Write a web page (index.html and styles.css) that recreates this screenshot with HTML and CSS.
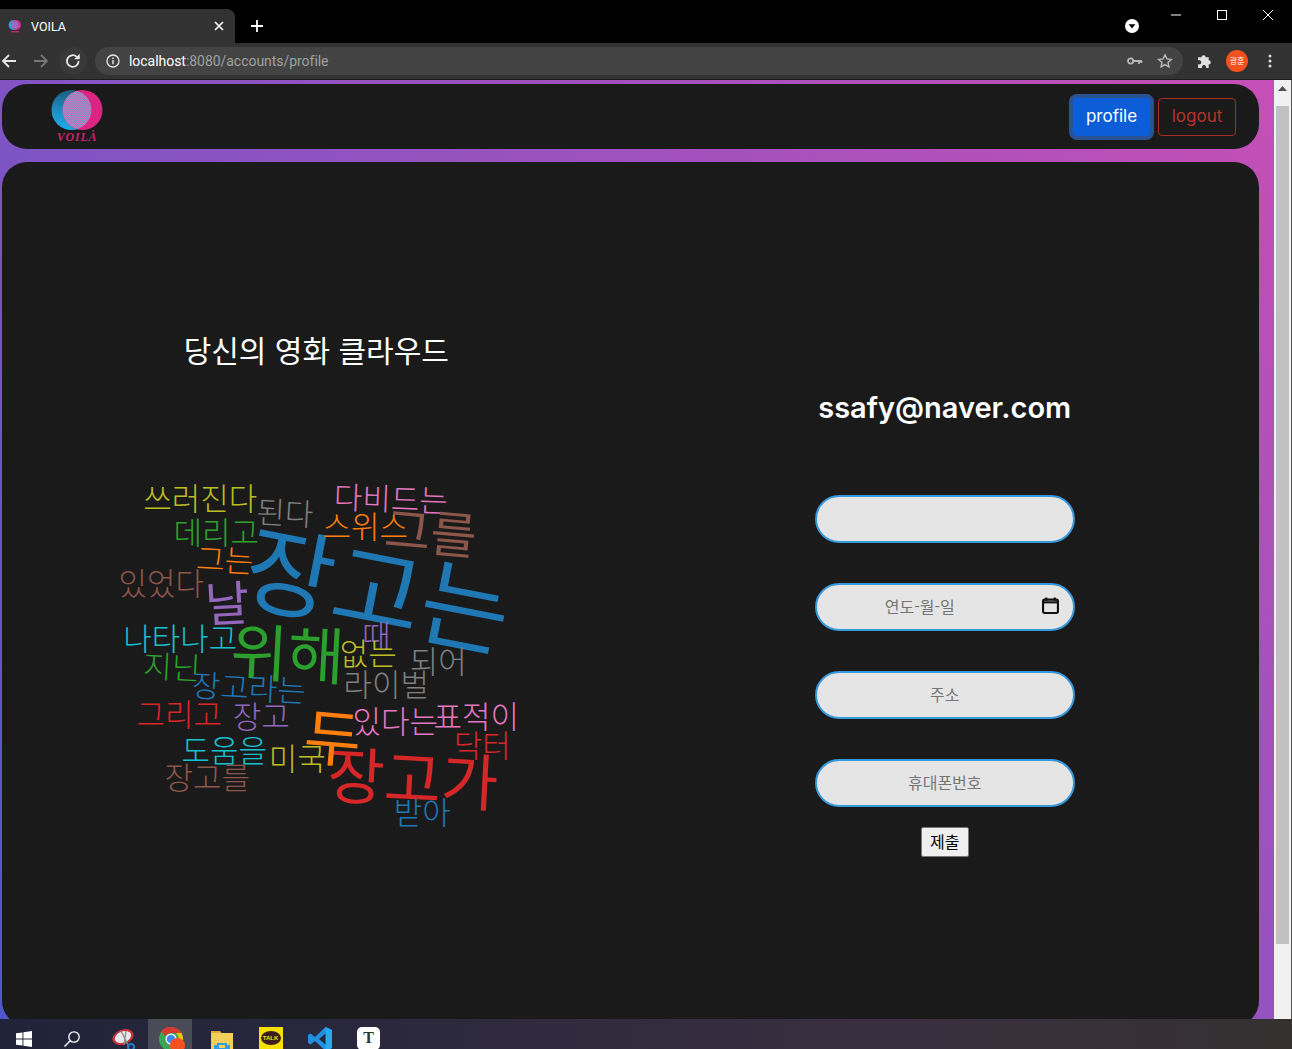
FILE: index.html
```html
<!DOCTYPE html>
<html lang="ko">
<head>
  <meta charset="UTF-8" />
  <title>VOILA</title>
  <link rel="stylesheet" href="styles.css">
</head>
<body>
  <div class="tabstrip">
    <div class="tab">
      <svg class="favicon" viewBox="0 0 14 14" width="14" height="14">
        <circle cx="5.6" cy="6" r="5" fill="#2a9fd6"/>
        <circle cx="8" cy="6" r="5" fill="#dd2a86"/>
        <circle cx="6.8" cy="6" r="3.8" fill="#9a6cc0"/>
        <rect x="3" y="12" width="8" height="1.4" fill="#c0246f"/>
      </svg>
      <span class="tab-title">VOILA</span>
      <svg class="tab-close" viewBox="0 0 10 10" width="10" height="10"><path d="M1 1l8 8M9 1l-8 8" stroke="#fff" stroke-width="1.7"/></svg>
    </div>
    <svg class="new-tab" viewBox="0 0 12 12" width="12" height="12"><path d="M6 0v12M0 6h12" stroke="#fff" stroke-width="1.8"/></svg>
    <div class="window-tools">
      <svg class="profile-drop" viewBox="0 0 14 14" width="14" height="14"><circle cx="7" cy="7" r="7" fill="#fff"/><path d="M3.6 5.2h6.8L7 9.4z" fill="#000"/></svg>
      <svg class="win-btn" viewBox="0 0 46 30" width="46" height="30"><path d="M18 15h10" stroke="#fff"/></svg>
      <svg class="win-btn" viewBox="0 0 46 30" width="46" height="30"><rect x="18.5" y="10.5" width="9" height="9" fill="none" stroke="#fff"/></svg>
      <svg class="win-btn" viewBox="0 0 46 30" width="46" height="30"><path d="M18 10l10 10M28 10l-10 10" stroke="#fff"/></svg>
    </div>
  </div>

  <div class="toolbar">
    <svg class="tool-icon" viewBox="0 0 16 16" width="16" height="16"><path d="M15 8H2M8 2L2 8l6 6" fill="none" stroke="#e8e8e8" stroke-width="1.8"/></svg>
    <svg class="tool-icon" viewBox="0 0 16 16" width="16" height="16"><path d="M1 8h13M8 2l6 6-6 6" fill="none" stroke="#777" stroke-width="1.8"/></svg>
    <div class="reload">
      <svg viewBox="0 0 16 16" width="18" height="18"><path d="M13 8a5.2 5.2 0 1 1-1.6-3.7" fill="none" stroke="#e8e8e8" stroke-width="1.6"/><path d="M14 1.5v5h-5z" fill="#e8e8e8"/></svg>
    </div>
    <div class="omnibox">
      <svg viewBox="0 0 14 14" width="14" height="14"><circle cx="7" cy="7" r="6" fill="none" stroke="#e8e8e8" stroke-width="1.3"/><path d="M7 6v4.2M7 3.6v1.4" stroke="#e8e8e8" stroke-width="1.4"/></svg>
      <span class="url"><b>localhost</b>:8080/accounts/profile</span>
      <svg class="omni-key" viewBox="0 0 16 10" width="16" height="10"><circle cx="3.6" cy="5" r="2.6" fill="none" stroke="#bbb" stroke-width="1.8"/><path d="M6 5h9M12 5v3M14.4 5v2" stroke="#bbb" stroke-width="1.8"/></svg>
      <svg class="omni-star" viewBox="0 0 16 16" width="16" height="16"><path d="M8 1.8l1.9 4.1 4.4.5-3.3 3 .9 4.4L8 11.6l-3.9 2.2.9-4.4-3.3-3 4.4-.5z" fill="none" stroke="#bbb" stroke-width="1.4"/></svg>
    </div>
    <svg class="puzzle" viewBox="0 0 16 16" width="17" height="17"><path d="M1 5h3.2a2 2 0 1 1 4 0H11v2.8a2 2 0 1 1 0 4V15H8.4a2 2 0 1 0-3.6 0H1v-3.6a2 2 0 1 0 0-3.4z" fill="#e0e0e0"/></svg>
    <div class="avatar">광훈</div>
    <svg class="dots" viewBox="0 0 4 14" width="4" height="14"><circle cx="2" cy="2" r="1.5" fill="#ddd"/><circle cx="2" cy="7" r="1.5" fill="#ddd"/><circle cx="2" cy="12" r="1.5" fill="#ddd"/></svg>
  </div>

  <div class="viewport">
    <div class="page">
      <nav class="navbar">
        <div class="logo">
          <svg viewBox="0 0 52 41" width="52" height="41">
            <defs>
              <pattern id="hatch" width="1.5" height="1.5" patternUnits="userSpaceOnUse" patternTransform="rotate(45)">
                <rect width="1.5" height="1.5" fill="#d860a8"/>
                <rect width="0.7" height="1.5" fill="#6ea8dc"/>
              </pattern>
              <linearGradient id="blueFade" x1="0" y1="0" x2="0" y2="1">
                <stop offset="0" stop-color="#1b5d7a"/>
                <stop offset="0.6" stop-color="#1c96cf"/>
                <stop offset="1" stop-color="#1ea8e6"/>
              </linearGradient>
            </defs>
            <circle cx="20.500" cy="20" r="20" fill="url(#blueFade)"/>
            <circle cx="31.500" cy="20" r="20" fill="#dc2583"/>
            <path d="M26 0.800a20 20 0 0 1 0 38.400a20 20 0 0 1 0-38.400z" fill="url(#hatch)"/>
          </svg>
          <span class="logo-name">VOILÀ</span>
        </div>
        <div class="nav-links">
          <a class="btn-profile">profile</a>
          <a class="btn-logout">logout</a>
        </div>
      </nav>

      <main class="card">
        <section class="cloud-col">
          <h2 class="cloud-title">당신의 영화 클라우드</h2>
          <div class="cloud">
            <span class="w w1">장고는</span>
            <span class="w w2">위해</span>
            <span class="w w3">장고가</span>
            <span class="w w4">두</span>
            <span class="w w5">날</span>
            <span class="w w6">쓰러진다</span>
            <span class="w w7">된다</span>
            <span class="w w8">다비드는</span>
            <span class="w w9">그를</span>
            <span class="w w10">스위스</span>
            <span class="w w11">데리고</span>
            <span class="w w12">그는</span>
            <span class="w w13">있었다</span>
            <span class="w w14">나타나고</span>
            <span class="w w15">지닌</span>
            <span class="w w16">장고라는</span>
            <span class="w w17">때</span>
            <span class="w w18">없는</span>
            <span class="w w19">되어</span>
            <span class="w w20">라이벌</span>
            <span class="w w21">그리고</span>
            <span class="w w22">장고</span>
            <span class="w w23">있다는</span>
            <span class="w w24">표적이</span>
            <span class="w w25">닥터</span>
            <span class="w w26">도움을</span>
            <span class="w w27">미국</span>
            <span class="w w28">장고를</span>
            <span class="w w29">받아</span>
          </div>
        </section>

        <section class="form-col">
          <h2 class="email">ssafy@naver.com</h2>
          <form class="profile-form">
            <input class="field" type="text" name="nickname" />
            <div class="date-wrap">
              <input class="field field-date" type="text" name="birth" placeholder="연도-월-일" />
              <svg class="cal" viewBox="0 0 16 16" width="17" height="17"><path d="M4 .5v3M12 .5v3" stroke="#111" stroke-width="2"/><rect x="1" y="2.500" width="14" height="12.500" rx="1.500" fill="none" stroke="#111" stroke-width="2"/><path d="M1 5h14" stroke="#111" stroke-width="2"/></svg>
            </div>
            <input class="field" type="text" name="address" placeholder="주소" />
            <input class="field" type="text" name="phone" placeholder="휴대폰번호" />
            <button class="submit" type="button">제출</button>
          </form>
        </section>
      </main>
    </div>
    <div class="scrollbar">
      <svg viewBox="0 0 9 5" width="9" height="5"><path d="M0 5L4.500 0 9 5z" fill="#505050"/></svg>
      <div class="thumb"></div>
    </div>
  </div>

  <footer class="taskbar">
    <div class="task-item">
      <svg viewBox="0 0 16 16" width="16" height="16"><path d="M0 2.300L6.500 1.400V7.500H0zM7.400 1.300L16 0V7.500H7.400zM0 8.400H6.500V14.600L0 13.700zM7.400 8.400H16V16L7.400 14.700z" fill="#fff"/></svg>
    </div>
    <div class="task-item">
      <svg viewBox="0 0 16 16" width="16" height="16"><circle cx="10" cy="6" r="5.200" fill="none" stroke="#fff" stroke-width="1.300"/><path d="M6.200 9.800L.5 15.500" stroke="#fff" stroke-width="1.400"/></svg>
    </div>
    <div class="task-item task-snip">
      <svg viewBox="0 0 24 24" width="24" height="24"><ellipse cx="11" cy="9" rx="11" ry="7.500" transform="rotate(-20 11 9)" fill="#c9313b"/><ellipse cx="11" cy="9" rx="8.500" ry="5.500" transform="rotate(-20 11 9)" fill="#e8e8e8"/><path d="M9 3l8 16M14 3L12 17" stroke="#8a8a8a" stroke-width="1.300"/><circle cx="19" cy="19" r="3" fill="none" stroke="#1f7fc4" stroke-width="2"/></svg>
    </div>
    <div class="task-item task-wide task-active">
      <svg viewBox="0 0 26 26" width="26" height="26"><circle cx="12" cy="12" r="12" fill="#3aa757"/><path d="M12 0a12 12 0 0 1 10.400 6H12a6 6 0 0 0-5.200 3L2 4.400A12 12 0 0 1 12 0z" fill="#d93a30"/><path d="M22.400 6A12 12 0 0 1 14 23.800L18 15a6 6 0 0 0-1-9z" fill="#f4c20d"/><circle cx="12" cy="12" r="5.500" fill="#fff"/><circle cx="12" cy="12" r="4.300" fill="#4285f4"/><circle cx="18.500" cy="18.500" r="7.500" fill="#f4511e"/></svg>
    </div>
    <div class="task-item task-wide task-folder">
      <svg viewBox="0 0 22 22" width="22" height="22"><path d="M0 1h9l2 2.500h-11z" fill="#e0a93a"/><rect y="3" width="22" height="19" fill="#f6cf5a"/><path d="M6 13h10v2h3v7H3v-7h3z" fill="#2f9fe0"/><rect x="8" y="15" width="6" height="3" fill="#f6cf5a"/></svg>
    </div>
    <div class="task-item task-wide">
      <div class="kakao"><span class="kakao-bubble">TALK</span></div>
    </div>
    <div class="task-item task-wide">
      <svg viewBox="0 0 24 24" width="24" height="24"><path d="M17.500 0L24 3v18l-6.500 3L7 14l-4.500 3.500L0 16v-8l2.500-1.500L7 10z" fill="#1f8fe0"/><path d="M17.500 0L24 3v18l-6.500 3z" fill="#27a9f0"/><path d="M17.500 6.500L11 12l6.500 5.500z" fill="#25283a"/></svg>
    </div>
    <div class="task-item task-wide">
      <div class="typora">T</div>
    </div>
  </footer>
</body>
</html>
```

FILE: styles.css
```css
* {
  box-sizing: border-box;
}

html, body {
  margin: 0;
  padding: 0;
  height: 1049px;
  overflow: hidden;
}

body {
  display: flex;
  flex-direction: column;
  background: #000;
  font-family: "Noto Sans CJK KR", "Noto Sans", sans-serif;
}

/* browser frame */
.tabstrip {
  height: 43px;
  background: #000;
  display: flex;
  align-items: flex-end;
  flex-shrink: 0;
}

.tab {
  width: 235px;
  height: 34px;
  background: #323232;
  border-radius: 0 8px 0 0;
  display: flex;
  align-items: center;
  padding-left: 8px;
  color: #fff;
}

.favicon {
  flex-shrink: 0;
}

.tab-title {
  margin-left: 9px;
  font-family: Roboto, sans-serif;
  font-size: 12.5px;
  flex: 1;
}

.tab-close {
  margin-right: 11px;
}

.new-tab {
  margin: 0 0 11px 16px;
}

.window-tools {
  margin-left: auto;
  margin-right: 1px;
  align-self: flex-start;
  display: flex;
  align-items: flex-start;
}

.profile-drop {
  margin: 19px 14px 0 0;
}

.win-btn {
  display: block;
}

.toolbar {
  height: 37px;
  background: #323232;
  border-bottom: 1px solid #1c1c1c;
  display: flex;
  align-items: center;
  flex-shrink: 0;
  padding-bottom: 1px;
}

.tool-icon {
  margin-left: 1px;
  margin-right: 15px;
}

.reload {
  width: 28px;
  height: 28px;
  border-radius: 50%;
  background: #383838;
  display: flex;
  align-items: center;
  justify-content: center;
  margin-left: -5px;
}

.omnibox {
  width: 1088px;
  height: 28px;
  margin-left: 8px;
  border-radius: 14px;
  background: #434343;
  display: flex;
  align-items: center;
  padding: 0 10px 0 11px;
}

.url {
  margin-left: 9px;
  font-family: Roboto, sans-serif;
  font-size: 14px;
  letter-spacing: -0.04px;
  color: #a0a0a0;
  flex: 1;
}

.url b {
  font-weight: 400;
  color: #fff;
}

.omni-key {
  margin-right: 14px;
}

.puzzle {
  margin-left: 14px;
}

.avatar {
  width: 22px;
  height: 22px;
  border-radius: 50%;
  background: #f4511e;
  color: #fff;
  font-size: 8px;
  line-height: 22px;
  text-align: center;
  margin-left: 12px;
}

.dots {
  margin-left: 20px;
}

.viewport {
  flex: 1;
  display: flex;
  min-height: 0;
}

/* page */
.page {
  width: 1274px;
  overflow: hidden;
  background: linear-gradient(45deg, #4f57cc 0%, #c64fb6 100%);
  padding: 4px 15px 0 2px;
  font-family: Inter, "Noto Sans CJK KR", sans-serif;
}

.navbar {
  height: 65px;
  background: #1a1a1a;
  border-radius: 25px;
  display: flex;
  align-items: center;
  justify-content: space-between;
  padding: 0 23px 0 49px;
}

.logo {
  display: flex;
  flex-direction: column;
  align-items: center;
  width: 52px;
}

.logo svg {
  display: block;
}

.logo-name {
  font-family: "Liberation Serif", serif;
  font-weight: 700;
  font-style: italic;
  font-size: 12px;
  letter-spacing: 0.8px;
  line-height: 13px;
  color: #c8246f;
}

.nav-links {
  display: flex;
  gap: 8px;
  align-items: center;
}

.btn-profile,
.btn-logout {
  height: 38px;
  display: flex;
  align-items: center;
  justify-content: center;
  border-radius: 4px;
  font-size: 17px;
  padding-bottom: 2px;
}

.btn-profile {
  width: 77px;
  background: #0b5ed7;
  color: #fff;
  box-shadow: 0 0 0 4px #2a5394;
}

.btn-logout {
  width: 78px;
  border: 1px solid #a52e28;
  color: #b5332c;
}

.card {
  margin-top: 13px;
  height: 864px;
  background: #1a1a1a;
  border-radius: 25px;
  display: grid;
  grid-template-columns: 1fr 1fr;
}

.cloud-col {
  display: flex;
  flex-direction: column;
  align-items: center;
  padding-top: 167px;
}

.cloud-title {
  margin: 0;
  color: #fff;
  font-family: "Noto Sans CJK KR", sans-serif;
  font-weight: 400;
  font-size: 30px;
  line-height: 40px;
}

.cloud {
  position: relative;
  width: 420px;
  height: 370px;
  margin-top: 98px;
  margin-left: 6px;
  font-family: "Noto Sans CJK KR", sans-serif;
  font-weight: 300;
}

.w {
  position: absolute;
  transform: translate(-50%, -50%);
  white-space: nowrap;
  line-height: 1;
  font-size: 31px;
}

/* cloud is 420x370, its top left sits at page 110,470 */
.w1 { left: 270px; top: 117px; font-size: 97px; font-weight: 400; color: #1f77b4; transform: translate(-50%, -50%) rotate(11deg); }
.w2 { left: 179px; top: 183px; font-size: 62px; font-weight: 400; color: #2ca02c; transform: translate(-50%, -50%) rotate(3deg); }
.w3 { left: 304px; top: 308px; font-size: 62px; font-weight: 400; color: #d62728; transform: translate(-50%, -50%) rotate(3deg); }
.w4 { left: 224px; top: 267px; font-size: 62px; font-weight: 400; color: #ff7f0e; transform: translate(-50%, -50%) rotate(5deg); }
.w5 { left: 118px; top: 133px; font-size: 48px; font-weight: 400; color: #9467bd; transform: translate(-50%, -50%) rotate(-3deg); }
.w6 { left: 91px; top: 29px; color: #bcbd22; }
.w7 { left: 176px; top: 44px; color: #7f7f7f; transform: translate(-50%, -50%) rotate(3deg); }
.w8 { left: 282px; top: 30px; color: #e377c2; transform: translate(-50%, -50%) rotate(2deg); }
.w9 { left: 322px; top: 62px; font-size: 50px; font-weight: 400; color: #8c564b; transform: translate(-50%, -50%) rotate(5deg); }
.w10 { left: 256px; top: 57px; color: #ff7f0e; }
.w11 { left: 107px; top: 63px; color: #2ca02c; }
.w12 { left: 116px; top: 91px; color: #ff7f0e; transform: translate(-50%, -50%) rotate(3deg); }
.w13 { left: 52px; top: 114px; color: #8c564b; }
.w14 { left: 71px; top: 169px; color: #17becf; }
.w15 { left: 63px; top: 198px; color: #2ca02c; transform: translate(-50%, -50%) rotate(3deg); }
.w16 { left: 140px; top: 219px; color: #1f77b4; transform: translate(-50%, -50%) rotate(3deg); }
.w17 { left: 267px; top: 166px; color: #9467bd; }
.w18 { left: 259px; top: 184px; color: #bcbd22; }
.w19 { left: 329px; top: 192px; color: #7f7f7f; }
.w20 { left: 277px; top: 215px; color: #7f7f7f; }
.w21 { left: 70px; top: 245px; color: #d62728; }
.w22 { left: 152px; top: 247px; color: #9467bd; }
.w23 { left: 286px; top: 252px; color: #e377c2; }
.w24 { left: 367px; top: 247px; color: #e377c2; }
.w25 { left: 373px; top: 276px; color: #d62728; }
.w26 { left: 115px; top: 281px; color: #17becf; }
.w27 { left: 188px; top: 289px; color: #bcbd22; }
.w28 { left: 98px; top: 308px; color: #8c564b; }
.w29 { left: 313px; top: 343px; color: #1f77b4; }

.form-col {
  display: flex;
  flex-direction: column;
  align-items: center;
  padding-top: 224px;
}

.email {
  margin: 0;
  color: #fff;
  font-size: 29px;
  line-height: 44px;
  font-weight: 600;
}

.profile-form {
  display: flex;
  flex-direction: column;
  align-items: center;
  gap: 40px;
  margin-top: 65px;
}

.field {
  display: block;
  width: 260px;
  height: 48px;
  background: #e5e5e5;
  border: 2px solid #3498db;
  border-radius: 24px;
  padding: 0 2px 2px;
  text-align: center;
  font-family: "Noto Sans CJK KR", sans-serif;
  font-size: 16px;
  outline: none;
}

.field::placeholder {
  color: #757575;
}

.date-wrap {
  position: relative;
}

.field-date {
  padding-right: 52px;
}

.cal {
  position: absolute;
  right: 16px;
  top: 14px;
}

.submit {
  margin-top: -20px;
  width: 48px;
  height: 30px;
  padding: 0 0 2px;
  background: #efefef;
  border: 1px solid #767676;
  border-radius: 2px;
  color: #000;
  font-family: "Noto Sans CJK KR", sans-serif;
  font-size: 16px;
}

.scrollbar {
  width: 17px;
  background: #f1f1f1;
  display: flex;
  flex-direction: column;
  align-items: center;
  padding: 6px 2px 0;
}

.thumb {
  width: 13px;
  height: 838px;
  margin-top: 15px;
  background: #c1c1c1;
}

.viewport::after {
  content: "";
  width: 1px;
  background: #555;
}

/* windows taskbar */
.taskbar {
  height: 30px;
  flex-shrink: 0;
  overflow: hidden;
  display: flex;
  background: linear-gradient(90deg, #20233a 0%, #3a2f40 70%, #343130 100%);
}

.task-item {
  width: 48px;
  height: 48px;
  display: flex;
  justify-content: center;
  padding-top: 12px;
}

.task-snip {
  margin-left: 4px;
  padding-top: 9px;
}

.task-wide {
  width: 49px;
  padding-top: 8px;
}

.task-folder {
  padding-top: 11px;
}

.task-active {
  background: #4b4b57;
  background-clip: padding-box;
  border-right: 5px solid transparent;
  padding-left: 3px;
}

.kakao {
  width: 24px;
  height: 24px;
  background: #f7e000;
  display: flex;
  justify-content: center;
  padding-top: 4px;
}

.kakao-bubble {
  width: 20px;
  height: 14px;
  border-radius: 50%;
  background: #3b1e1e;
  color: #f7e000;
  font-family: "Liberation Sans", sans-serif;
  font-size: 6px;
  font-weight: 700;
  line-height: 14px;
  text-align: center;
}

.typora {
  width: 23px;
  height: 23px;
  border-radius: 5px;
  background: #fff;
  color: #333;
  font-family: "Liberation Serif", serif;
  font-weight: 700;
  font-size: 16px;
  line-height: 22px;
  text-align: center;
}
```
